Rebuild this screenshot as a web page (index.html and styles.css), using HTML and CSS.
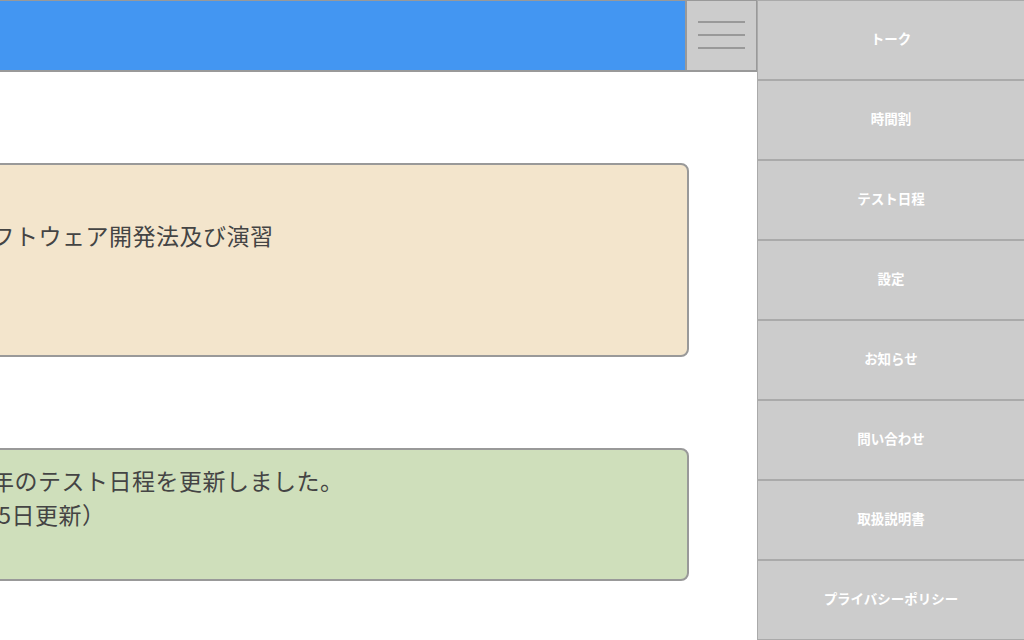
FILE: index.html
```html
<!DOCTYPE html>
<html lang="ja">
<head>
  <meta charset="UTF-8" />
  <title>ホーム</title>
  <meta name="viewport" content="width=device-width, initial-scale=1.0"/>
  <link rel="stylesheet" href="styles.css">
</head>
<body>
  <div class="page menu-open">
    <header class="header">
      <div class="header-bar"></div>
      <button class="menu-btn" aria-label="メニュー">
        <span></span>
        <span></span>
        <span></span>
      </button>
    </header>

    <main class="content">
      <div class="card card-class">
        <p>ソフトウェア開発法及び演習</p>
      </div>
      <div class="card card-news">
        <p>2024年のテスト日程を更新しました。<br>（7月5日更新）</p>
      </div>
    </main>
  </div>

  <nav class="side-menu">
    <a href="#">トーク</a>
    <a href="#">時間割</a>
    <a href="#">テスト日程</a>
    <a href="#">設定</a>
    <a href="#">お知らせ</a>
    <a href="#">問い合わせ</a>
    <a href="#">取扱説明書</a>
    <a href="#">プライバシーポリシー</a>
  </nav>
</body>
</html>
```

FILE: styles.css
```css
html, body {
  margin: 0;
  height: 100%;
  overflow: hidden;
}
body {
  font-family: "Noto Sans CJK JP", "Noto Sans", sans-serif;
  background: #fff;
  color: #444;
}
.page {
  width: 1024px;
}
/* page slides left while the side menu is open */
.page.menu-open {
  margin-left: -267px;
}
.header {
  display: flex;
  height: 72px;
  box-sizing: border-box;
  border-top: 1px solid #999;
  border-bottom: 2px solid #999;
}
.header-bar {
  flex: 1;
  background: #4396f2;
}
.menu-btn {
  width: 72px;
  box-sizing: border-box;
  background: #ccc;
  border: none;
  border-left: 2px solid #999;
  border-right: 1px solid #999;
  padding: 20px 0 0;
  display: flex;
  flex-direction: column;
  align-items: center;
  gap: 11px;
  cursor: pointer;
}
.menu-btn span {
  display: block;
  width: 47px;
  height: 2px;
  background: #999;
}
.content {
  padding: 0 68px;
}
.card {
  margin-top: 91px;
  border: 2px solid #999;
  border-radius: 8px;
  font-size: 23px;
  letter-spacing: 0.5px;
  line-height: 34px;
}
.card p {
  margin: 0;
}
.card-class {
  height: 194px;
  box-sizing: border-box;
  background: #f3e5cc;
  padding: 53px 20px 0 165px;
}
.card-news {
  height: 133px;
  box-sizing: border-box;
  background: #cfdfbb;
  padding: 13px 20px 0 135px;
}
.side-menu {
  position: fixed;
  top: 0;
  right: 0;
  width: 267px;
  height: 640px;
  box-sizing: border-box;
  background: #ccc;
  border-left: 1px solid #aaa;
}
.side-menu a {
  display: flex;
  align-items: center;
  justify-content: center;
  height: 80px;
  box-sizing: border-box;
  border-top: 1px solid #aaa;
  border-bottom: 1px solid #aaa;
  padding-bottom: 5px;
  color: #fff;
  font-size: 13.5px;
  font-weight: bold;
  text-decoration: none;
}
```
